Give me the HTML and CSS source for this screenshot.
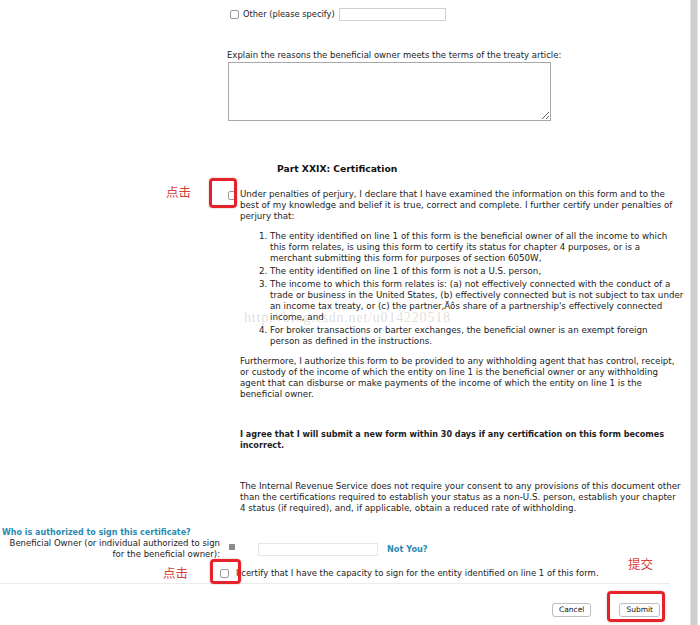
FILE: index.html
```html
<!DOCTYPE html>
<html>
<head>
<meta charset="utf-8">
<link rel="stylesheet" href="styles.css">
</head>
<body>
<div class="page">
  <div class="content">
    <div class="other-row">
      <span class="cb"></span>
      <span class="other-label">Other (please specify)</span>
      <input class="other-input" type="text">
    </div>

    <div class="explain">
      <div class="explain-label">Explain the reasons the beneficial owner meets the terms of the treaty article:</div>
      <textarea class="explain-box"></textarea>
    </div>

    <h2 class="part-title">Part XXIX: Certification</h2>

    <div class="cert">
      <span class="note note-click1">点击</span>
      <span class="redbox redbox1"></span>
      <span class="watermark">http://blog.csdn.net/u014220518</span>
      <div class="cert-row">
        <span class="cb cb-cert"></span>
        <div class="cert-text">
          <p class="para">Under penalties of perjury, I declare that I have examined the information on this form and to the<br>best of my knowledge and belief it is true, correct and complete. I further certify under penalties of<br>perjury that:</p>
          <ol class="items">
            <li>The entity identified on line 1 of this form is the beneficial owner of all the income to which<br>this form relates, is using this form to certify its status for chapter 4 purposes, or is a<br>merchant submitting this form for purposes of section 6050W,</li>
            <li>The entity identified on line 1 of this form is not a U.S. person,</li>
            <li>The income to which this form relates is: (a) not effectively connected with the conduct of a<br>trade or business in the United States, (b) effectively connected but is not subject to tax under<br>an income tax treaty, or (c) the partner‚Äôs share of a partnership's effectively connected<br>income, and</li>
            <li>For broker transactions or barter exchanges, the beneficial owner is an exempt foreign<br>person as defined in the instructions.</li>
          </ol>
          <p class="para">Furthermore, I authorize this form to be provided to any withholding agent that has control, receipt,<br>or custody of the income of which the entity on line 1 is the beneficial owner or any withholding<br>agent that can disburse or make payments of the income of which the entity on line 1 is the<br>beneficial owner.</p>
          <p class="para bold agree">I agree that I will submit a new form within 30 days if any certification on this form becomes<br>incorrect.</p>
          <p class="para irs">The Internal Revenue Service does not require your consent to any provisions of this document other<br>than the certifications required to establish your status as a non-U.S. person, establish your chapter<br>4 status (if required), and, if applicable, obtain a reduced rate of withholding.</p>
        </div>
      </div>
    </div>

    <div class="sign">
      <div class="who">Who is authorized to sign this certificate?</div>
      <div class="owner-row">
        <div class="owner-label">Beneficial Owner (or individual authorized to sign<br>for the beneficial owner):</div>
        <span class="mini-square"></span>
        <input class="owner-input" type="text">
        <span class="not-you">Not You?</span>
      </div>
      <div class="capacity-row">
        <span class="note note-click2">点击</span>
        <span class="redbox redbox2"></span>
        <span class="cb cb-cap"></span>
        <span class="capacity-text">I certify that I have the capacity to sign for the entity identified on line 1 of this form.</span>
        <span class="note note-submit">提交</span>
      </div>
    </div>

    <div class="actions">
      <button class="btn">Cancel</button>
      <div class="submit-wrap">
        <span class="redbox redbox3"></span>
        <button class="btn">Submit</button>
      </div>
    </div>
  </div>
  <div class="scrollbar"></div>
</div>
</body>
</html>
```

FILE: styles.css
```css
html, body {
  margin: 0;
  padding: 0;
  background: #ffffff;
}

body {
  font-family: "DejaVu Sans", Verdana, sans-serif;
  font-size: 8.7px;
  line-height: 11px;
  color: #1c1c1c;
  width: 700px;
  height: 625px;
  overflow: hidden;
}

.page {
  display: flex;
  height: 625px;
}

.content {
  flex: 1;
  position: relative;
}

.scrollbar {
  width: 6px;
  margin-right: 2px;
  background: #cfcfcf;
  border-left: 1px solid #e2e2e2;
  border-right: 1px solid #e6e6e6;
}

/* checkboxes */
.cb {
  display: inline-block;
  width: 7px;
  height: 7px;
  border: 1px solid #9a9a9a;
  border-radius: 2px;
  background: #fff;
  flex: none;
}

/* Other row */
.other-row {
  display: flex;
  align-items: center;
  padding: 8px 0 0 230px;
  height: 13px;
}

.other-label {
  margin-left: 4px;
  font-size: 8.3px;
}

.other-input {
  margin: 0 0 0 4px;
  padding: 0;
  width: 105px;
  height: 11px;
  border: 1px solid #d0d0d0;
  border-radius: 0;
}

/* explain */
.explain {
  padding: 29px 0 0 227px;
}

.explain-label {
  font-size: 8.5px;
  line-height: 11px;
}

.explain-box {
  display: block;
  margin: 1px 0 0 1px;
  padding: 0;
  width: 321px;
  height: 57px;
  border: 1px solid #a8a8a8;
  border-radius: 0;
  resize: both;
}

/* title */
.part-title {
  margin: 41px 0 0 277px;
  font-size: 9.2px;
  line-height: 13px;
  font-weight: bold;
  color: #111;
}

/* certification block */
.cert {
  position: relative;
  margin-top: 14px;
  padding-left: 228px;
}

.cert-row {
  display: flex;
  align-items: flex-start;
}

.cb-cert {
  margin-top: 2px;
  margin-right: 3px;
}

.cert-text {
  white-space: nowrap;
}

.para {
  margin: 0;
}

.items {
  margin: 9px 0 9px 0;
  padding: 0 0 0 30px;
}

.items li {
  margin-bottom: 2px;
}

.items li:last-child {
  margin-bottom: 0;
}

.bold {
  font-weight: bold;
  font-size: 8.1px;
}

.agree {
  margin-top: 29px;
}

.irs {
  margin-top: 30px;
}

.watermark {
  position: absolute;
  left: 244px;
  top: 123px;
  font-family: "Liberation Serif", serif;
  font-size: 14px;
  letter-spacing: 0.8px;
  color: rgba(150, 150, 150, 0.32);
  pointer-events: none;
  white-space: nowrap;
}

/* annotations */
.note {
  position: absolute;
  font-family: "Noto Sans CJK SC", sans-serif;
  font-size: 12.5px;
  line-height: 14px;
  color: #d8403a;
  white-space: nowrap;
}

.note-click1 {
  left: 166px;
  top: -4px;
}

.redbox {
  position: absolute;
  border: 3px solid #e5232b;
  border-radius: 4px;
  box-shadow: 0 0 2px rgba(120, 0, 0, 0.35);
  pointer-events: none;
}

.redbox1 {
  left: 209px;
  top: -11px;
  width: 22px;
  height: 24px;
}

/* signing */
.sign {
  margin-top: 13px;
}

.who {
  padding-left: 2px;
  font-weight: bold;
  font-size: 8px;
  line-height: 11px;
  color: #2a8bb3;
}

.owner-row {
  display: flex;
  align-items: center;
}

.owner-label {
  width: 220px;
  text-align: right;
  font-size: 8.5px;
  line-height: 11px;
}

.mini-square {
  width: 6px;
  height: 6px;
  background: #8d8d8d;
  margin-left: 9px;
  margin-top: -4px;
}

.owner-input {
  margin: 0 0 0 23px;
  padding: 0;
  width: 118px;
  height: 11px;
  border: 1px solid #e6e6e6;
  border-radius: 0;
}

.not-you {
  margin-left: 9px;
  font-weight: bold;
  font-size: 8.2px;
  color: #2a8bb3;
}

.capacity-row {
  position: relative;
  display: flex;
  align-items: center;
  height: 20px;
  margin-top: 3px;
  padding-left: 220px;
  border-bottom: 1px solid #ececec;
  margin-right: 20px;
}

.cb-cap {
  margin-right: 7px;
}

.capacity-text {
  font-size: 8.5px;
}

.note-click2 {
  left: 163px;
  top: 3px;
}

.note-submit {
  left: 628px;
  top: -6px;
}

.redbox2 {
  left: 210px;
  top: -4px;
  width: 25px;
  height: 19px;
}

/* actions */
.actions {
  display: flex;
  justify-content: flex-end;
  align-items: center;
  gap: 28px;
  padding: 19px 30px 0 0;
}

.btn {
  font-family: "DejaVu Sans", Verdana, sans-serif;
  font-size: 7.5px;
  line-height: 10px;
  height: 14px;
  padding: 0 6px;
  background: #ffffff;
  border: 1px solid #bdbdbd;
  border-radius: 3px;
  color: #111;
}

.submit-wrap {
  position: relative;
}

.redbox3 {
  left: -12px;
  top: -12px;
  width: 52px;
  height: 25px;
}
```
